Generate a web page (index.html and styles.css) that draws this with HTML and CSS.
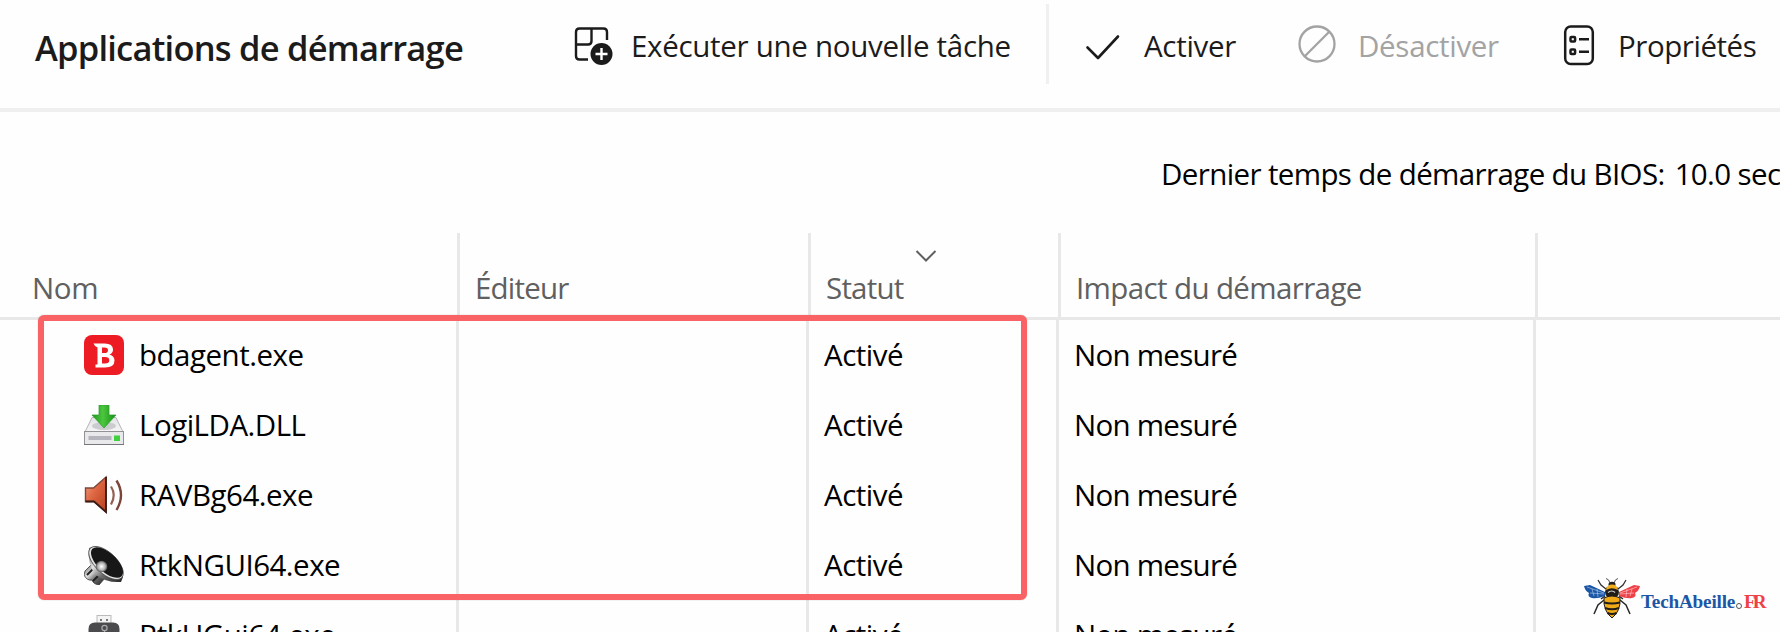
FILE: index.html
```
<!DOCTYPE html>
<html lang="fr">
<head>
    <meta charset="UTF-8">
    <meta name="viewport" content="width=device-width, initial-scale=1.0">
    <title>Applications de démarrage</title>
    <link rel="stylesheet" href="styles.css">
</head>
<body>

<header class="toolbar">
    <h1>Applications de démarrage</h1>
    <div class="tool tool-run">
        <svg width="40" height="46" viewBox="0 0 40 46" fill="none" stroke="#1b1b1b" stroke-width="2.4">
            <path d="M14 36.500H5.500Q2 36.500 2 33V9Q2 5.500 5.500 5.500H29.500Q33 5.500 33 9V17M17.500 5.500V18Q17.500 21.500 14 21.500H2"/>
            <circle cx="27.500" cy="31" r="11" fill="#1b1b1b" stroke="none"/>
            <path d="M27.500 25v12M21.500 31h12" stroke="#fff"/>
        </svg>
        <span>Exécuter une nouvelle tâche</span>
    </div>
    <div class="separator"></div>
    <div class="tool tool-enable">
        <svg width="36" height="30" viewBox="0 0 36 30" fill="none" stroke="#1b1b1b" stroke-width="2.600" stroke-linecap="round" stroke-linejoin="round">
            <path d="M2.500 16.500L13 27L33 5.500"/>
        </svg>
        <span>Activer</span>
    </div>
    <div class="tool tool-disable">
        <svg width="40" height="40" viewBox="0 0 40 40" fill="none" stroke="#a3a3a3" stroke-width="2.300">
            <circle cx="20" cy="20" r="17.500"/>
            <path d="M32 8L8 32"/>
        </svg>
        <span>Désactiver</span>
    </div>
    <div class="tool tool-props">
        <svg width="32" height="42" viewBox="0 0 32 42" fill="none" stroke="#1b1b1b" stroke-width="2.500">
            <rect x="2.200" y="1.500" width="27.600" height="37.600" rx="5.500"/>
            <rect x="7.500" y="12" width="4.600" height="4.600" rx="1"/>
            <rect x="7.500" y="24.500" width="4.600" height="4.600" rx="1"/>
            <path d="M16 14.300h10M16 26.800h10"/>
        </svg>
        <span>Propriétés</span>
    </div>
</header>

<div class="bios">
    <span>Dernier temps de démarrage du BIOS:</span>
    <span class="bios-value">10.0 sec</span>
</div>

<main class="list">
    <div class="row head">
        <div class="cell">Nom</div>
        <div class="cell">Éditeur</div>
        <div class="cell">Statut
            <svg class="chevron" width="22" height="14" viewBox="0 0 22 14" fill="none" stroke="#606060" stroke-width="2">
                <path d="M1.500 2l9.500 9.500L20.500 2"/>
            </svg>
        </div>
        <div class="cell">Impact du démarrage</div>
    </div>

    <div class="row">
        <div class="cell name">
            <svg width="40" height="40" viewBox="0 0 40 40">
                <rect width="40" height="40" rx="8" fill="#ed1c24"/>
                <path d="M9.500 8.500H20.500Q29 8.500 29 14.500Q29 18 25.500 19.500Q30.500 21 30.500 25.500Q30.500 32.500 21 32.500H11.500V29.500H13.500V12.500Q11 12 9.500 8.500ZM18 12.500V18H20.500Q24 18 24 15.200Q24 12.500 20.500 12.500ZM18 22V28.500H21Q25.300 28.500 25.300 25.200Q25.300 22 21 22Z" fill="#fff" fill-rule="evenodd"/>
            </svg>
            <span>bdagent.exe</span>
        </div>
        <div class="cell"></div>
        <div class="cell">Activé</div>
        <div class="cell">Non mesuré</div>
    </div>

    <div class="row">
        <div class="cell name">
            <svg width="40" height="40" viewBox="0 0 40 40">
                <defs>
                    <linearGradient id="disk" x1="0" y1="0" x2="0" y2="1">
                        <stop offset="0" stop-color="#e2e2e4"/>
                        <stop offset="1" stop-color="#f7f7f8"/>
                    </linearGradient>
                    <linearGradient id="arrow" x1="0" y1="0" x2="1" y2="0">
                        <stop offset="0" stop-color="#1e9a1e"/>
                        <stop offset=".45" stop-color="#4cc63e"/>
                        <stop offset="1" stop-color="#149014"/>
                    </linearGradient>
                </defs>
                <path d="M8 12.500H32L39 27H1Z" fill="url(#disk)" stroke="#b5b5b8"/>
                <ellipse cx="20" cy="21" rx="12" ry="4" fill="#cbccd0"/>
                <rect x=".5" y="26.500" width="39" height="13" fill="#e9e9eb" stroke="#929296"/>
                <path d="M0 39.500h40" stroke="#77777b"/>
                <rect x="4.500" y="31" width="23" height="4" fill="#b5b5be"/>
                <rect x="30" y="30.500" width="6" height="5.500" fill="#3fd13f"/>
                <path d="M15 0H25V10H32L20 23L8 10H15Z" fill="url(#arrow)" stroke="#2c9a2c" stroke-width=".7"/>
            </svg>
            <span>LogiLDA.DLL</span>
        </div>
        <div class="cell"></div>
        <div class="cell">Activé</div>
        <div class="cell">Non mesuré</div>
    </div>

    <div class="row">
        <div class="cell name">
            <svg width="40" height="40" viewBox="0 0 40 40" fill="none">
                <defs>
                    <linearGradient id="speaker" x1="0" y1="0" x2="1" y2="1">
                        <stop offset="0" stop-color="#f5a183"/>
                        <stop offset=".45" stop-color="#dd6540"/>
                        <stop offset="1" stop-color="#b5401f"/>
                    </linearGradient>
                </defs>
                <path d="M1.500 13H9.500L22 2V37L10 26.500H1.500Z" fill="url(#speaker)" stroke="#7c4738" stroke-width="1.400"/>
                <path d="M1.500 26.500H10L22 37V2" stroke="#3b1b14" stroke-width="1.800"/>
                <path d="M27 11.500Q32.500 20 27 29.500" stroke="#936052" stroke-width="2.200"/>
                <path d="M32.500 5.500Q41.500 20 32.500 35" stroke="#7b4639" stroke-width="2.400"/>
            </svg>
            <span>RAVBg64.exe</span>
        </div>
        <div class="cell"></div>
        <div class="cell">Activé</div>
        <div class="cell">Non mesuré</div>
    </div>

    <div class="row">
        <div class="cell name">
            <svg width="40" height="40" viewBox="0 0 40 40">
                <defs>
                    <linearGradient id="metal" x1="0" y1="0" x2="1" y2="1">
                        <stop offset="0" stop-color="#555"/>
                        <stop offset=".35" stop-color="#e4e4e4"/>
                        <stop offset=".6" stop-color="#6b6b6b"/>
                        <stop offset="1" stop-color="#222"/>
                    </linearGradient>
                    <radialGradient id="dome">
                        <stop offset="0" stop-color="#fff"/>
                        <stop offset=".6" stop-color="#b9b9b9"/>
                        <stop offset="1" stop-color="#555"/>
                    </radialGradient>
                </defs>
                <path d="M1 26L7 20L21 33L15 40Q9 39 8 35Q3 36 0 30Z" fill="url(#metal)" stroke="#333" stroke-width=".8"/>
                <path d="M3 30l6-6M9 36l6-6" stroke="#222" stroke-width="2"/>
                <path d="M5 3Q3 20 12 30Q22 38 37 37L39 32L8 2Z" fill="url(#metal)"/>
                <ellipse cx="22" cy="18" rx="21.500" ry="10.500" transform="rotate(43 22 18)" fill="#e2e2e2" stroke="#444" stroke-width=".8"/>
                <ellipse cx="23" cy="17.500" rx="20" ry="9.500" transform="rotate(43 23 17.500)" fill="#171717"/>
                <circle cx="17.500" cy="21.500" r="5.800" fill="url(#dome)"/>
            </svg>
            <span>RtkNGUI64.exe</span>
        </div>
        <div class="cell"></div>
        <div class="cell">Activé</div>
        <div class="cell">Non mesuré</div>
    </div>

    <div class="row">
        <div class="cell name">
            <svg width="40" height="40" viewBox="0 0 40 40">
                <rect x="13" y=".5" width="14" height="9" fill="#f4f4f4" stroke="#bbb"/>
                <path d="M16 5h2M22 5h2" stroke="#777" stroke-width="2"/>
                <path d="M4.500 40V14Q4.500 7.500 11 7.500H29Q35.500 7.500 35.500 14V40Z" fill="#4b4b4d"/>
                <circle cx="20.500" cy="13" r="2.600" fill="none" stroke="#aaa" stroke-width="1.200"/>
                <path d="M20.500 15.500V24" stroke="#aaa" stroke-width="1.200"/>
            </svg>
            <span>RtkUGui64.exe</span>
        </div>
        <div class="cell"></div>
        <div class="cell">Activé</div>
        <div class="cell">Non mesuré</div>
    </div>

    <div class="highlight"></div>
</main>

<div class="logo">
    <svg width="56" height="42" viewBox="0 0 56 42" fill="none">
        <g stroke="#2b2a28" stroke-width="1.200">
            <path d="M26 6Q25 2 22 1.500M30 6Q31 2 34 1.500" stroke-width=".8"/>
            <path d="M22 12L17 8L14 3M34 12L39 8L42 3"/>
            <path d="M20 23L14 28L10 37M36 23L42 28L46 37M21 19L17 22M35 19L39 22" stroke-width="1.500"/>
        </g>
        <path d="M21 15L6 8L0 9Q1 14 5 16Q3 20 8 21Q13 22 21 19Z" fill="#1c57a5"/>
        <path d="M35 15L50 8L56 9Q55 14 51 16Q53 20 48 21Q43 22 35 19Z" fill="#ee4147"/>
        <path d="M3 10L20 16M6 16L20 17M8 12L10 19M13 12L14 20" stroke="#b9d2ef" stroke-width=".6"/>
        <path d="M53 10L36 16M50 16L36 17M48 12L46 19M43 12L42 20" stroke="#ffd0d0" stroke-width=".6"/>
        <ellipse cx="28" cy="7.500" rx="3.500" ry="2.800" fill="#222"/>
        <ellipse cx="28" cy="15" rx="7" ry="6.800" fill="#201d18"/>
        <path d="M22 13Q23 7.500 28 7.500Q33 7.500 34 13Q28 9.500 22 13Z" fill="#f2ad1c"/>
        <path d="M24 15.500Q28 12.500 31 15.500" stroke="#ddd" stroke-width="1.200"/>
        <path d="M20 21Q28 17 36 21Q37 34 28 41Q19 34 20 21Z" fill="#f0aa18" stroke="#201d18"/>
        <path d="M20 25.500Q28 27.500 36 25.500M21 31Q28 33.500 35 31M23.500 36Q28 38 32.500 36" stroke="#201d18" stroke-width="2.200"/>
    </svg>
    <span class="logo-name">TechAbeille</span>
    <i class="logo-dot"></i>
    <span class="logo-tld">FR</span>
</div>

</body>
</html>
```
FILE: styles.css
```
* {
    box-sizing: border-box;
}
body {
    margin: 0;
    width: 1780px;
    height: 632px;
    overflow: hidden;
    position: relative;
    background-color: #fefefe;
    color: #000;
    font-family: "Open Sans", "Noto Sans", sans-serif;
    font-size: 29.5px;
    letter-spacing: -0.5px;
    white-space: nowrap;
}
svg {
    flex: none;
    display: block;
}

/* Toolbar */
.toolbar {
    display: flex;
    height: 112px;
    padding-left: 35px;
    border-bottom: 4px solid #efefef;
    color: #1b1b1b;
}
.toolbar h1 {
    margin: 0;
    width: 539px;
    font-size: 34.5px;
    font-weight: 600;
    line-height: 96px;
    letter-spacing: -0.78px;
}
.tool {
    display: flex;
    align-items: center;
    height: 91px;
    letter-spacing: -0.3px;
}
.tool-run {
    width: 472px;
    gap: 17px;
}
.separator {
    width: 3px;
    height: 80px;
    margin-top: 4px;
    background-color: #f0f0f0;
}
.tool-enable {
    width: 213px;
    padding-left: 36px;
    gap: 23px;
}
.tool-disable {
    width: 301px;
    padding-left: 35px;
    gap: 21px;
    color: #a3a3a3;
}
.tool-disable svg {
    margin-bottom: 4px;
}
.tool-props {
    gap: 23px;
    letter-spacing: -0.45px;
}

.bios {
    display: flex;
    gap: 10px;
    height: 121px;
    padding-left: 1161px;
    line-height: 123px;
    letter-spacing: -0.62px;
}

/* Startup list */
.list {
    position: relative;
    height: 399px;
    overflow: hidden;
}
.row {
    display: grid;
    grid-template-columns: 459px 350px 250px 477px 1fr;
    height: 70px;
    line-height: 70px;
}
.cell {
    padding-left: 15px;
    border-right: 3px solid #e8e8e8;
}
.cell:nth-child(4) {
    letter-spacing: -0.73px;
}
.name {
    display: flex;
    align-items: center;
    gap: 15px;
    padding-left: 84px;
}
.head {
    grid-template: 84px / 460px 351px 250px 477px 1fr;
    height: 87px;
    line-height: 109px;
    border-bottom: 3px solid #e8e8e8;
    color: #606060;
    letter-spacing: -0.8px;
}
.head .cell {
    position: relative;
}
.head .cell:first-child {
    padding-left: 32px;
    letter-spacing: -0.4px;
}
.head .cell:nth-child(4) {
    letter-spacing: -0.62px;
}
.chevron {
    position: absolute;
    left: 104px;
    top: 16px;
}
.highlight {
    position: absolute;
    left: 38px;
    top: 82px;
    width: 989px;
    height: 285px;
    border: 6px solid #fa6366;
    border-radius: 6px;
    box-shadow: 0 0 1px rgba(90, 60, 60, 0.6);
}

/* Site logo */
.logo {
    position: absolute;
    left: 1584px;
    top: 577px;
    display: flex;
    height: 42px;
    font-family: "Liberation Serif", serif;
    font-size: 19.2px;
    font-weight: 700;
    line-height: 49px;
    letter-spacing: -0.2px;
}
.logo-name {
    width: 95px;
    margin-left: 1px;
    color: #1c57a5;
}
.logo-dot {
    width: 6px;
    height: 6px;
    margin: 26px 2px 0 0;
    border: 1px solid #555;
    border-radius: 50%;
}
.logo-tld {
    color: #ee4147;
    letter-spacing: -3px;
}
```
